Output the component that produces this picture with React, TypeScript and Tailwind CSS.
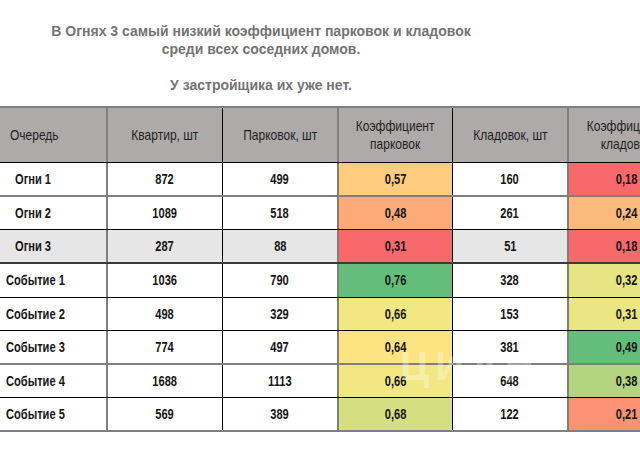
const FONT = { fontFamily: '"Liberation Sans", Arial, sans-serif' }

type Row = {
  name: string
  indent: string
  flats: number
  parks: number
  kPark: string
  kParkBg: string
  stores: number
  kStore: string
  kStoreBg: string
  rowBg: string
  h: string
  line: string
}

const rows: Row[] = [
  { name: 'Огни 1', indent: 'pl-[15px]', flats: 872, parks: 499, kPark: '0,57', kParkBg: 'bg-[#fdcc7e]', stores: 160, kStore: '0,18', kStoreBg: 'bg-[#f8696b]', rowBg: 'bg-white', h: 'h-[34px]', line: 'border-b-2 border-[#7f7f7f]' },
  { name: 'Огни 2', indent: 'pl-[15px]', flats: 1089, parks: 518, kPark: '0,48', kParkBg: 'bg-[#fbaa78]', stores: 261, kStore: '0,24', kStoreBg: 'bg-[#fcbb7b]', rowBg: 'bg-white', h: 'h-[33px]', line: 'border-b border-black' },
  { name: 'Огни 3', indent: 'pl-[15px]', flats: 287, parks: 88, kPark: '0,31', kParkBg: 'bg-[#f8696b]', stores: 51, kStore: '0,18', kStoreBg: 'bg-[#f8696b]', rowBg: 'bg-[#e7e6e6]', h: 'h-[34px]', line: 'border-b-2 border-[#3a3a3a]' },
  { name: 'Событие 1', indent: 'pl-[6px]', flats: 1036, parks: 790, kPark: '0,76', kParkBg: 'bg-[#63be7b]', stores: 328, kStore: '0,32', kStoreBg: 'bg-[#e6e483]', rowBg: 'bg-white', h: 'h-[34px]', line: 'border-b border-black' },
  { name: 'Событие 2', indent: 'pl-[6px]', flats: 498, parks: 329, kPark: '0,66', kParkBg: 'bg-[#f1e783]', stores: 153, kStore: '0,31', kStoreBg: 'bg-[#ebe583]', rowBg: 'bg-white', h: 'h-[33px]', line: 'border-b border-black' },
  { name: 'Событие 3', indent: 'pl-[6px]', flats: 774, parks: 497, kPark: '0,64', kParkBg: 'bg-[#fee383]', stores: 381, kStore: '0,49', kStoreBg: 'bg-[#63be7b]', rowBg: 'bg-white', h: 'h-[34px]', line: 'border-b-2 border-[#7f7f7f]' },
  { name: 'Событие 4', indent: 'pl-[6px]', flats: 1688, parks: 1113, kPark: '0,66', kParkBg: 'bg-[#f1e783]', stores: 648, kStore: '0,38', kStoreBg: 'bg-[#b3d580]', rowBg: 'bg-white', h: 'h-[33px]', line: 'border-b border-black' },
  { name: 'Событие 5', indent: 'pl-[6px]', flats: 569, parks: 389, kPark: '0,68', kParkBg: 'bg-[#d5df82]', stores: 122, kStore: '0,21', kStoreBg: 'bg-[#fa9273]', rowBg: 'bg-white', h: 'h-[34px]', line: 'border-b-2 border-[#7f7f7f]' },
]

// column widths include the right border
const c1 = 'w-[108px] shrink-0 border-r-2 border-[#7f7f7f]'
const c2 = 'w-[115px] shrink-0 border-r border-black'
const c3 = 'w-[116px] shrink-0 border-r-2 border-[#7f7f7f]'
const c4 = 'w-[114px] shrink-0 border-r border-black'
const c5 = 'w-[116px] shrink-0 border-r-2 border-[#7f7f7f]'
const c6 = 'w-[115px] shrink-0'

// condensed look: the reference uses a narrow face, squeeze Liberation Sans
function T({ children, left }: { children: React.ReactNode; left?: boolean }) {
  return (
    <span className={`inline-block whitespace-nowrap scale-x-[0.74] ${left ? 'origin-left' : 'origin-center'}`}>
      {children}
    </span>
  )
}

function H({ children, left }: { children: React.ReactNode; left?: boolean }) {
  return (
    <span className={`inline-block whitespace-nowrap scale-x-[0.8] ${left ? 'origin-left' : 'origin-center'}`}>
      {children}
    </span>
  )
}

export default function App() {
  return (
    <div className="relative w-[640px] h-[450px] overflow-hidden bg-white">
      {/* Heading */}
      <div
        className="w-[522px] pt-[22px] text-center text-[14px] leading-[18px] font-bold text-[#747474]"
        style={FONT}
      >
        <p>В Огнях 3 самый низкий коэффициент парковок и кладовок</p>
        <p>среди всех соседних домов.</p>
        <p>&nbsp;</p>
        <p>У застройщика их уже нет.</p>
      </div>

      {/* Table */}
      <div className="mt-[12px] w-[700px] text-[15px] text-[#161616]" style={FONT}>
        <div className="flex h-[57px] bg-[#aeaaaa] text-[#1f1f1f] border-t-2 border-b border-t-[#7f7f7f] border-b-black">
          <div className={`${c1} flex items-center pl-[10px]`}><H left>Очередь</H></div>
          <div className={`${c2} flex items-center justify-center`}><H>Квартир, шт</H></div>
          <div className={`${c3} flex items-center justify-center`}><H>Парковок, шт</H></div>
          <div className={`${c4} flex items-center justify-center text-center leading-[18px]`}>
            <H>Коэффициент<br />парковок</H>
          </div>
          <div className={`${c5} flex items-center justify-center`}><H>Кладовок, шт</H></div>
          <div className={`${c6} flex items-center justify-center text-center leading-[18px]`}>
            <H>Коэффициент<br />кладовок</H>
          </div>
        </div>

        {rows.map((r) => (
          <div key={r.name} className={`flex font-bold ${r.h} ${r.rowBg} ${r.line}`}>
            <div className={`${c1} flex items-center ${r.indent}`}><T left>{r.name}</T></div>
            <div className={`${c2} flex items-center justify-center`}><T>{r.flats}</T></div>
            <div className={`${c3} flex items-center justify-center`}><T>{r.parks}</T></div>
            <div className={`${c4} ${r.kParkBg} flex items-center justify-center`}><T>{r.kPark}</T></div>
            <div className={`${c5} flex items-center justify-center`}><T>{r.stores}</T></div>
            <div className={`${c6} ${r.kStoreBg} flex items-center justify-center`}><T>{r.kStore}</T></div>
          </div>
        ))}
      </div>

      {/* faint watermark */}
      <div
        className="pointer-events-none absolute left-[400px] top-[336px] text-[40px] font-bold tracking-[6px] text-white opacity-30"
        style={FONT}
      >
        ЦИАН
      </div>
    </div>
  )
}
